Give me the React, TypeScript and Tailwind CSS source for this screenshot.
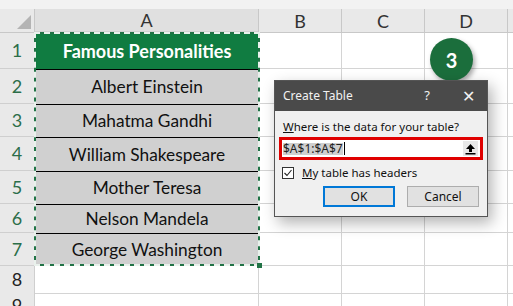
import React from "react";

const names = [
  "Albert Einstein",
  "Mahatma Gandhi",
  "William Shakespeare",
  "Mother Teresa",
  "Nelson Mandela",
  "George Washington",
];

// row heights in px, rows 1..9
const rowH = ["h-[36px]", "h-[35px]", "h-[33px]", "h-[34px]", "h-[33px]", "h-[29px]", "h-[33px]", "h-[26px]", "h-[20px]"];

function UploadIcon() {
  return (
    <svg width="11" height="12" viewBox="0 0 11 12">
      <path d="M5.5 1 L10 6 L7 6 L7 9 L4 9 L4 6 L1 6 Z" fill="#000" />
      <rect x="0.5" y="10" width="10" height="1.5" fill="#000" />
    </svg>
  );
}

export default function App() {
  return (
    <div className="relative h-[306px] w-[513px] overflow-hidden bg-white font-['Lato',sans-serif] text-[#222]">
      {/* top strip */}
      <div className="h-[9px] bg-[#f2f2f2]" />

      {/* column headers */}
      <div className="grid h-[24px] grid-cols-[35px_224px_83px_83px_83px_1fr] bg-[#e9e9e9] text-[18px] text-[#333]">
        <div className="relative border-b border-r border-[#c8c8c8]">
          <div className="absolute bottom-[3px] right-[3px] h-0 w-0 border-b-[14px] border-l-[14px] border-b-[#b4b4b4] border-l-transparent" />
        </div>
        <div className="flex items-center justify-center border-b-2 border-r border-b-[#d2d2d2] border-r-[#c8c8c8] bg-[#e0e0e0] leading-none">A</div>
        <div className="flex items-center justify-center border-b border-r border-[#c8c8c8] leading-none">B</div>
        <div className="flex items-center justify-center border-b border-r border-[#c8c8c8] leading-none">C</div>
        <div className="flex items-center justify-center border-b border-r border-[#c8c8c8] leading-none">D</div>
        <div className="border-b border-[#c8c8c8]" />
      </div>

      {/* body */}
      <div className="relative">
        {rowH.map((h, i) => (
          <div key={i} className={`grid grid-cols-[35px_224px_83px_83px_83px_1fr] ${h}`}>
            <div
              className={`flex items-center justify-center border-b border-r border-[#cfcfcf] bg-[#e9e9e9] text-[18px] ${
                i < 7 ? "text-[#2c6e49]" : "text-[#222]"
              }`}
            >
              {i + 1}
            </div>
            {i === 0 ? (
              <div className="flex items-center justify-center bg-[#107c41] text-[18px] font-bold text-white">
                Famous Personalities
              </div>
            ) : i < 7 ? (
              <div className="flex items-center justify-center border-t border-black bg-[#d0d0d0] text-[17.3px] text-[#111]">
                {names[i - 1]}
              </div>
            ) : (
              <div className="border-b border-r border-[#d4d4d4]" />
            )}
            <div className="border-b border-r border-[#d4d4d4]" />
            <div className="border-b border-r border-[#d4d4d4]" />
            <div className="border-b border-r border-[#d4d4d4]" />
            <div className="border-b border-[#d4d4d4]" />
          </div>
        ))}

        {/* marching ants selection around A1:A7 */}
        <div className="pointer-events-none absolute left-[34px] top-[-1px] h-[234px] w-[226px] border-2 border-[#217346]">
          <div className="absolute inset-[-2px] border-2 border-dashed border-white/90" />
        </div>
        <div className="absolute left-[257px] top-[230px] h-[5px] w-[5px] bg-[#217346]" />
      </div>

      {/* step badge */}
      <div className="absolute left-[430px] top-[38px] flex h-[43px] w-[43px] items-center justify-center rounded-full bg-[#1b6e3c] text-[20px] font-bold text-white shadow-[2px_3px_5px_rgba(0,0,0,0.35)]">
        3
      </div>

      {/* Create Table dialog */}
      <div className="absolute left-[274px] top-[80px] w-[214px] border border-[#555] bg-[#f0f0f0] font-['Noto_Sans',sans-serif] shadow-[4px_6px_14px_rgba(0,0,0,0.3)]">
        <div className="flex h-[30px] items-center bg-[#4a4a4a] pl-[8px] text-[12px] text-[#f2f2f2]">
          <span className="flex-1">Create Table</span>
          <span className="w-[20px] text-center text-[13px]">?</span>
          <span className="ml-[25px] mr-[12px] text-[16px] font-light leading-none">✕</span>
        </div>
        <div className="px-[4px] pb-[9px] pt-[8px]">
          <div className="pl-[4px] text-[11.5px] leading-[16px] text-[#111]">
            <span className="underline">W</span>here is the data for your table?
          </div>
          <div className="mt-[2px] flex h-[23px] items-center border-[3px] border-[#e00000] bg-white">
            <div className="flex flex-1 items-center pl-[1px] text-[12px] leading-none text-[#222]">
              <span className="bg-[#cfcfcf]">$A$1:$A$7</span>
              <span className="ml-px h-[13px] w-px bg-black" />
            </div>
            <div className="mr-[2px] flex h-[15px] w-[15px] items-center justify-center bg-[#e8e8e8]">
              <UploadIcon />
            </div>
          </div>
          <div className="mt-[4px] flex items-center pl-[3px] text-[11.5px] text-[#111]">
            <div className="flex h-[12px] w-[12px] items-center justify-center border border-[#333] bg-white">
              <svg width="10" height="10" viewBox="0 0 10 10">
                <path d="M1.5 5 L4 7.5 L8.5 2" fill="none" stroke="#222" strokeWidth="1.1" />
              </svg>
            </div>
            <span className="ml-[8px]">
              <span className="underline">M</span>y table has headers
            </span>
          </div>
          <div className="mt-[5px] flex justify-end gap-[12px] pr-[4px] text-[12px] text-[#111]">
            <div className="flex h-[21px] w-[72px] items-center justify-center border-2 border-[#0078d7] bg-[#e1e1e1]">OK</div>
            <div className="flex h-[21px] w-[72px] items-center justify-center border border-[#adadad] bg-[#e1e1e1]">Cancel</div>
          </div>
        </div>
      </div>
    </div>
  );
}
